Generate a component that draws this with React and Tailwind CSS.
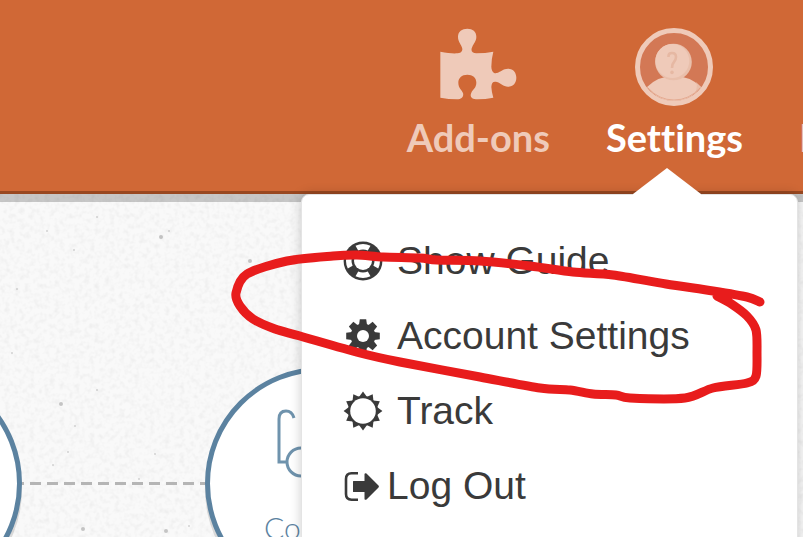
import { useState } from "react"

const SPECKS = [
    [97, 217, 1], [161, 237, 2], [47, 231, 1], [74, 250, 1], [169, 231, 1], [250, 261, 2],
    [17, 289, 1], [61, 404, 2], [97, 390, 1], [53, 465, 1], [68, 452, 1], [83, 529, 2],
    [166, 531, 2], [189, 526, 1], [139, 479, 1], [155, 454, 1], [75, 426, 1], [12, 353, 1],
]

const SCRIBBLE = [
    [760, 302], [747, 297], [713, 291], [666, 284], [613, 275], [573, 272], [530, 266], [480, 261],
    [437, 260], [420, 258], [383, 257], [357, 255], [333, 256], [287, 261], [247, 274], [236, 293],
    [240, 306], [253, 319], [275, 329], [300, 336], [360, 353], [400, 362], [480, 377], [540, 388],
    [570, 390], [593, 394], [616, 395], [630, 398], [685, 398], [713, 388], [747, 383], [756, 376],
    [757, 353], [756, 330], [747, 316], [730, 303], [717, 296],
]

// runs a smooth curve through all of the points
function smooth(p){
    let d = `M${p[0][0]} ${p[0][1]}`
    for(let i = 0; i < p.length - 1; i++){
        const a = p[i - 1] || p[i]
        const b = p[i]
        const c = p[i + 1]
        const e = p[i + 2] || c
        d += `C${b[0] + (c[0] - a[0]) / 7} ${b[1] + (c[1] - a[1]) / 7} ${c[0] - (e[0] - b[0]) / 7} ${c[1] - (e[1] - b[1]) / 7} ${c[0]} ${c[1]}`
    }
    return d
}

function PuzzleIcon(){
    return (
        <svg viewBox="149 52 231 216" className="w-[77px] h-[72px]" fill="#efcab9" aria-hidden="true">
            <path d="M150 123Q180 129 198 128C215 128 219 118 214 108C210 98 203 92 203 78C203 62 215 54 231 54C247 54 258 62 258 78C258 92 250 98 246 108C240 120 245 127 258 128Q285 128 309 123Q303 145 303 168C304 185 312 189 320 187C332 183 338 174 353 174C370 174 378 187 378 201C378 216 369 228 353 228C338 228 332 218 320 214C308 211 304 216 303 229Q304 245 309 261Q285 266 262 266C242 266 238 256 243 246C247 236 258 232 258 216C258 200 247 192 231 192C214 192 204 202 204 216C204 232 214 237 218 247C221 258 214 266 200 266Q175 266 150 261Z" />
        </svg>
    )
}

function AvatarIcon(){
    return (
        <svg viewBox="0 0 78 78" className="w-[78px] h-[78px]" aria-hidden="true">
            <circle cx="39" cy="39" r="36.5" fill="#d37855" stroke="#efcab9" strokeWidth="5" />
            <path d="M12 59Q23 48 39 48T66 59Q55 73 39 73T12 59Z" fill="#efcab9" />
            <path d="M61 54L66 59L60 65Q63 59 61 54Z" fill="#e9bfab" />
            <path d="M13 60Q24 72 39 72T65 60" fill="none" stroke="#dd9577" strokeWidth="0.6" />
            <circle cx="38.5" cy="34" r="18.3" fill="#e9bfab" />
            <circle cx="37.3" cy="33" r="17" fill="#efcab9" />
            <path d="M33.5 29V28Q33.5 25 37 25Q41 25 41 29Q41 32 39 34Q37 36 37 40" fill="none" stroke="#e6b8a3" strokeWidth="2.6" />
            <circle cx="37" cy="44.4" r="1.8" fill="#e6b8a3" />
        </svg>
    )
}

function GuideIcon(){
    return (
        <svg viewBox="-20 -20 40 40" className="w-10 h-10 mr-[14px] shrink-0" aria-hidden="true">
            <circle r="19.4" fill="#3a3a3a" />
            {[0, 90, 180, 270].map((a) => (
                <path key={a} transform={`rotate(${a})`} d="M-7.5 -15.2Q0 -18.8 7.5 -15.2L4.8 -10.4Q0 -12.6 -4.8 -10.4Z" fill="#fff" />
            ))}
            <circle r="9" fill="#fff" />
        </svg>
    )
}

function CogIcon(){
    return (
        <svg viewBox="-20 -20 40 40" className="w-10 h-10 mr-[14px] shrink-0" aria-hidden="true">
            <g fill="#3a3a3a">
                <circle r="12.4" />
                {[0, 45, 90, 135, 180, 225, 270, 315].map((a) => (
                    <path key={a} transform={`rotate(${a})`} d="M-4 -11L-3.2 -16.8H3.2L4 -11Z" />
                ))}
            </g>
            <circle r="6" fill="#fff" />
        </svg>
    )
}

function TrackIcon(){
    return (
        <svg viewBox="-20 -20 40 40" className="w-10 h-10 mr-[14px] shrink-0" aria-hidden="true">
            <g fill="#3a3a3a">
                <circle r="15" />
                {[0, 30, 60, 90, 120, 150, 180, 210, 240, 270, 300, 330].map((a) => (
                    <path key={a} transform={`rotate(${a})`} d="M-4 -14L0 -19.4L4 -14Z" />
                ))}
            </g>
            <circle r="12.8" fill="#fff" />
        </svg>
    )
}

function LogOutIcon(){
    return (
        <svg viewBox="0 0 36 40" className="w-9 h-10 mr-2 shrink-0" aria-hidden="true">
            <path d="M15 7.3H8.5Q3 7.3 3 13V28Q3 33.7 8.5 33.7H15" fill="none" stroke="#3a3a3a" strokeWidth="2.6" />
            <path d="M10.5 15H21.5V8Q22 6.6 23.5 7.5L35.5 19.5Q36.3 20.5 35.5 21.5L23.5 33.5Q22 34.4 21.5 33V26H10.5Q10 26 10 25.5V15.5Q10 15 10.5 15Z" fill="#3a3a3a" />
        </svg>
    )
}

const menu = [
    { name: "Show Guide", Icon: GuideIcon },
    { name: "Account Settings", Icon: CogIcon },
    { name: "Track", Icon: TrackIcon },
    { name: "Log Out", Icon: LogOutIcon },
]

function Menu(){
    return (
        <div className="absolute top-[194px] right-[5px] z-10 w-[497px] h-[400px] pt-7 pl-[41px] bg-white border border-[#e4e4e4] rounded-lg shadow-[0_0_12px_rgba(0,0,0,0.2)]">
            {menu.map(({ name, Icon }) => (
                <a key={name} href="#" className="flex items-center h-[75px] text-[39px] text-[#3a3a3a] whitespace-nowrap font-['Liberation_Sans',Arial,sans-serif]">
                    <Icon />
                    <span className="pt-0.5">{name}</span>
                </a>
            ))}
        </div>
    )
}

function Header({ open, setOpen }){
    return (
        <header className="h-[194px] shrink-0 bg-[#d06836] border-b-[3px] border-[#994821]">
            <nav className="flex justify-end gap-14 pt-7 text-[38px] leading-[46px] font-bold text-[#efcab9] [font-variant-ligatures:none]">
                <a href="#" className="flex flex-col items-center gap-2">
                    <span className="h-[78px]"><PuzzleIcon /></span>
                    <span>Add-ons</span>
                </a>
                <button type="button" onClick={()=>setOpen(!open)} className="relative flex flex-col items-center gap-2 text-white">
                    <AvatarIcon />
                    <span>Settings</span>
                    {open &&
                        <svg viewBox="0 0 68 27" className="absolute top-[140px] left-[27px] z-20 w-[68px] h-[27px]" aria-hidden="true">
                            <path d="M0 26L34 0L68 26V27H0Z" fill="#fff" />
                        </svg>
                    }
                </button>
                <a href="#" className="w-1 pt-[86px] overflow-hidden">Help</a>
            </nav>
        </header>
    )
}

function Paper(){
    return (
        <svg className="absolute inset-0 w-full h-full" aria-hidden="true">
            <filter id="grain" x="0" y="0" width="100%" height="100%">
                <feTurbulence type="fractalNoise" baseFrequency="0.2" numOctaves="2" seed="4" />
                <feColorMatrix values="0 0 0 0 0.4  0 0 0 0 0.4  0 0 0 0 0.4  0.3 0 0 0 -0.13" />
            </filter>
            <rect width="100%" height="100%" filter="url(#grain)" />
            {SPECKS.map(([x, y, r]) => (
                <circle key={`${x}-${y}`} cx={x} cy={y - 194} r={r} fill="#999" opacity={r === 2 ? 0.55 : 0.4} />
            ))}
        </svg>
    )
}

function Step({ children }){
    return (
        <div className="relative w-[233px] h-[233px] shrink-0 rounded-full bg-white border-[5px] border-[#5b82a0] shadow-[0_6px_0_rgba(0,0,0,0.12)]">
            {children}
        </div>
    )
}

function App() {
    const [open, setOpen] = useState(true)

    return (
        <div className="relative flex flex-col min-h-screen max-h-screen overflow-hidden bg-[#f9f9f9] font-[Lato,sans-serif]">
            <Header open={open} setOpen={setOpen} />
            <main className="relative flex-1 min-h-0 overflow-hidden">
                <Paper />
                <div className="relative h-2 bg-black/20"></div>
                <div className="relative flex items-center pt-[165px] -ml-[211px]">
                    <Step />
                    <div className="w-[183px] h-[3px] shrink-0 bg-[repeating-linear-gradient(90deg,#b5b5b5_0_2px,transparent_2px_8px,#b5b5b5_8px_17px)]"></div>
                    <Step>
                        <div className="flex flex-col items-center pt-[37px] gap-7 text-[30px] leading-9 font-light text-[#5b82a0]">
                            <svg viewBox="0 0 90 72" className="w-[90px] h-[72px]" fill="none" stroke="#6f93ad" strokeWidth="3" aria-hidden="true">
                                <path d="M17 9Q15 2 9 2Q2 2 2 10V53H10" />
                                <circle cx="24" cy="53" r="14" />
                            </svg>
                            <span>Contacts</span>
                        </div>
                    </Step>
                </div>
            </main>
            {open && <Menu />}
            <svg viewBox="0 0 803 537" className="absolute top-0 right-0 z-30 w-[803px] h-[537px] pointer-events-none" aria-hidden="true">
                <path d={smooth(SCRIBBLE)} fill="none" stroke="#e81c1c" strokeWidth="9" strokeLinecap="round" strokeLinejoin="round" />
            </svg>
        </div>
    )
}

export default App
